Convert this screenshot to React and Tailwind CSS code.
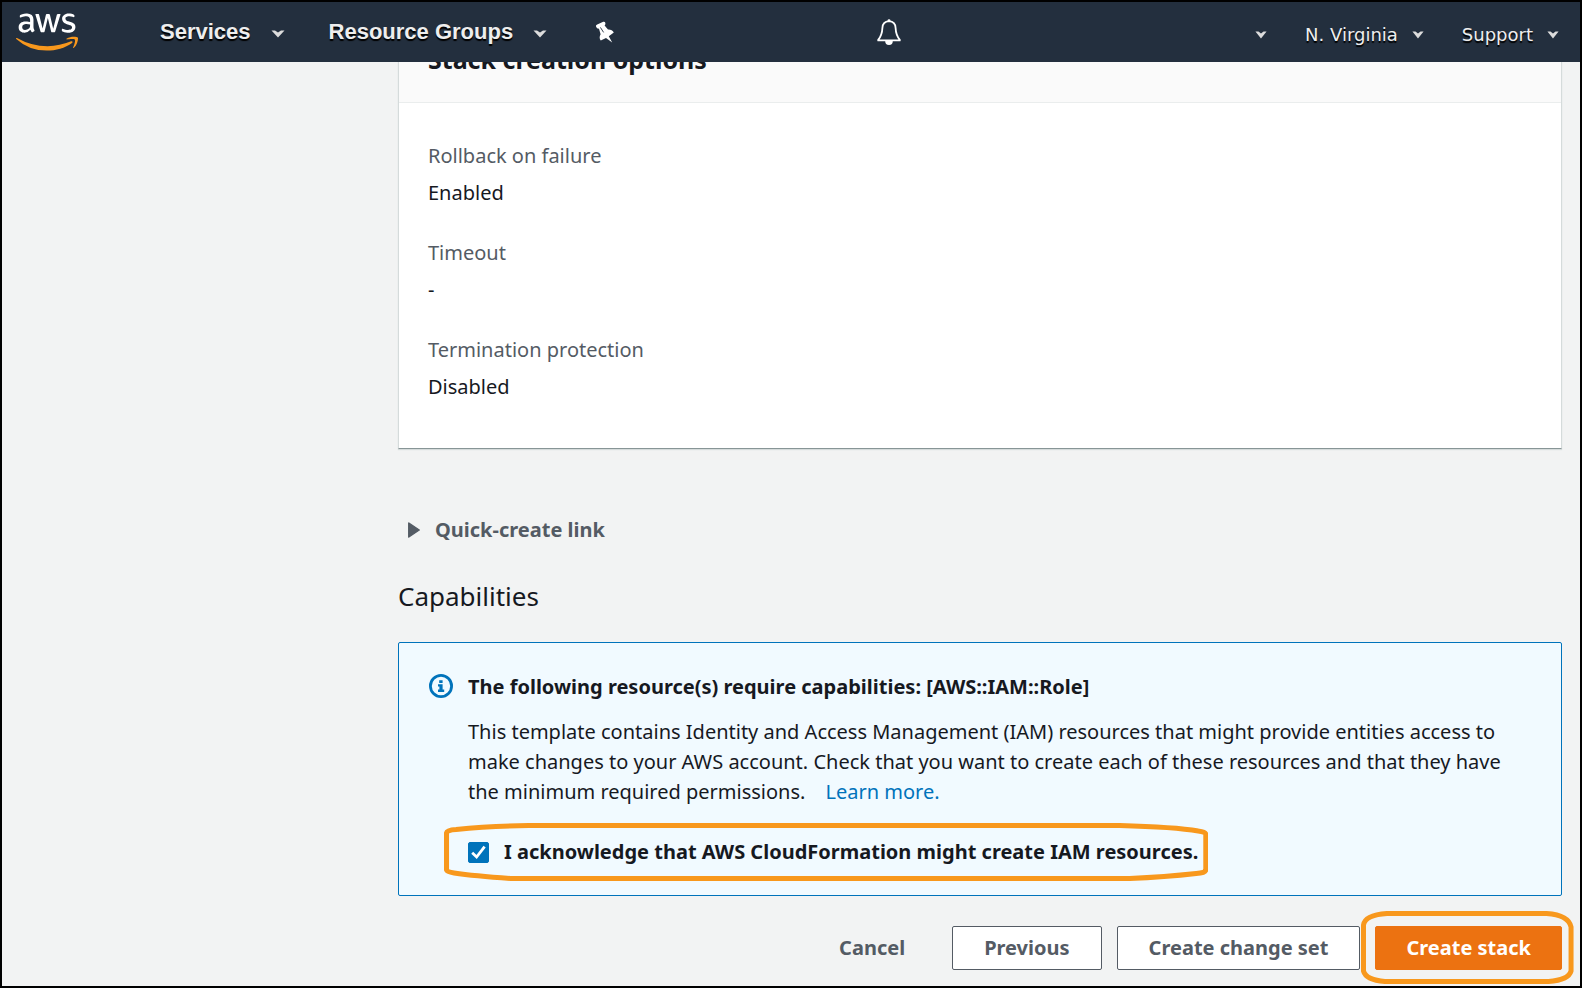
import { FaAws } from "react-icons/fa";

function Caret({ small }) {
  return (
    <svg className={small ? "h-2 w-3" : "mt-1 h-2 w-[14px]"} viewBox="0 0 14 8" aria-hidden="true" preserveAspectRatio="none">
      <path d="M0.5 0.5 H4 L7 2.6 L10 0.5 H13.5 L7 7.6 Z" fill="#dcdcdc" />
    </svg>
  );
}

function NavButton({ children }) {
  return (
    <button type="button" className="flex items-center gap-5 font-['Liberation_Sans',sans-serif] text-[22px] font-bold text-[#eeeeee] [text-shadow:0_2px_1px_#000]">
      {children}
      <Caret />
    </button>
  );
}

function UserButton({ children, label }) {
  return (
    <button type="button" aria-label={label} className="flex items-center gap-[14px] font-['DejaVu_Sans',sans-serif] text-lg text-[#eeeeee] [text-shadow:0_2px_1px_#000]">
      {children}
      <Caret small />
    </button>
  );
}

function Pin() {
  return (
    <svg className="h-[22px] w-5" viewBox="0 0 20 22" aria-hidden="true">
      <path
        d="M1 5.6 Q0.6 4 2.2 3.4 L8.2 0.8 Q10 0.4 10.4 2 Q10.6 3.6 9.6 4.4 L13 8.4 Q17.2 8.2 18.8 11.6 L13.8 15.2 L17.2 21.6 L11 17 L5.8 19.6 Q3.6 16.8 5.6 13.2 L4 7.8 Q1.6 7.8 1 5.6 Z"
        fill="#fff"
      />
      <path d="M5.4 6.4 L8.6 11.4" stroke="#232f3e" strokeWidth="0.9" fill="none" />
    </svg>
  );
}

function Bell() {
  return (
    <svg className="h-[26px] w-6" viewBox="0 0 24 26" aria-hidden="true" fill="none" stroke="#fff">
      <path d="M12 2.2 C7.5 2.6 5.5 5.2 5.4 9 C5.2 14 4.6 16.8 1.2 20.8 V21.4 H22.8 V20.8 C19.4 16.8 18.8 14 18.6 9 C18.5 5.2 16.5 2.6 12 2.2 Z" strokeWidth="1.8" strokeLinejoin="round" />
      <circle cx="12" cy="1.6" r="1.4" fill="#fff" stroke="none" />
      <path d="M8.2 22 H15.8 A3.8 4 0 0 1 8.2 22 Z" fill="#fff" stroke="none" />
    </svg>
  );
}

const options = [
  ["Rollback on failure", "Enabled"],
  ["Timeout", "-"],
  ["Termination protection", "Disabled"],
];

export default function App() {
  return (
    <div className="flex min-h-screen flex-col border-2 border-black bg-[#f2f3f3] font-['Noto_Sans',sans-serif] text-xl leading-[30px] text-[#16191f]">
      <header className="flex h-[60px] items-center justify-between bg-[#232f3e] pr-[21px] pl-[14px]">
        <div className="flex items-center">
          <a href="#home" aria-label="AWS home" className="mr-[82px]">
            <svg width="0" height="0" className="absolute" aria-hidden="true">
              <linearGradient id="logo" x1="0" y1="0" x2="0" y2="1">
                <stop offset="0.6" stopColor="#fff" />
                <stop offset="0.6" stopColor="#f8981d" />
              </linearGradient>
            </svg>
            <FaAws className="h-[50px] w-[62px]" style={{ fill: "url(#logo)" }} />
          </a>
          <nav className="flex items-center gap-11">
            <NavButton>Services</NavButton>
            <NavButton>Resource Groups</NavButton>
            <button type="button" aria-label="Pin shortcuts" className="pl-1"><Pin /></button>
          </nav>
        </div>
        <div className="flex items-center">
          <button type="button" aria-label="Notifications" className="mr-[354px]"><Bell /></button>
          <div className="flex items-center gap-[38px] pt-[5px]">
            <UserButton label="Account" />
            <UserButton>N. Virginia</UserButton>
            <UserButton>Support</UserButton>
          </div>
        </div>
      </header>

      <main className="flex-1 overflow-hidden pr-[18px] pl-[396px]">
        <section className="-mt-[40px] border border-[#d5dbdb] border-b-[#879596] bg-white shadow-[0_1px_1px_#d5dbdb]">
          <div className="border-b border-[#eaeded] bg-[#fafafa] px-[29px] pt-[21px] pb-7">
            <h2 className="text-[25px] leading-[30px] font-bold">Stack creation options</h2>
          </div>
          <dl className="flex flex-col gap-[30px] px-[29px] pt-[38px] pb-[46px]">
            {options.map(([name, value]) => (
              <div key={name} className="flex flex-col gap-[7px]">
                <dt className="text-[#545b64]">{name}</dt>
                <dd>{value}</dd>
              </div>
            ))}
          </dl>
        </section>

        <details className="mt-[66px] pl-[10px]">
          <summary className="flex cursor-pointer items-center gap-[15px] font-bold text-[#545b64]">
            <svg className="h-4 w-3" viewBox="0 0 12 16" aria-hidden="true">
              <path d="M0.8 1 L11.2 8 L0.8 15 Z" fill="#545b64" stroke="#545b64" strokeWidth="1.5" strokeLinejoin="round" />
            </svg>
            Quick-create link
          </summary>
        </details>

        <h2 className="mt-[33px] text-[26px] leading-9">Capabilities</h2>

        <section className="mt-7 flex gap-[15px] rounded-xs border border-[#0073bb] bg-[#f1faff] px-[30px] pt-[29px] pb-7">
          <svg className="mt-[2px] h-6 w-6 shrink-0" viewBox="0 0 24 24" aria-hidden="true">
            <circle cx="12" cy="12" r="10.6" fill="none" stroke="#0073bb" strokeWidth="2.8" />
            <path d="M10.2 6.2 H13.6 V9 H10.2 Z M9 10.2 H13.6 V15.6 H15.2 V18 H9 V15.6 H10.4 V12.4 H9 Z" fill="#0073bb" />
          </svg>
          <div className="flex-1">
            <h3 className="font-bold">The following resource(s) require capabilities: [AWS::IAM::Role]</h3>
            <p className="mt-[15px]">
              This template contains Identity and Access Management (IAM) resources that might provide entities access to make changes to your AWS account. Check that you want to create each of these resources and that they have the minimum required permissions.
              <a href="#learn-more" className="ml-5 text-[#0073bb]">Learn more.</a>
            </p>
            <div className="relative mt-[30px] flex w-fit items-center">
              <span className="grid">
                <input id="ack" type="checkbox" defaultChecked className="peer col-start-1 row-start-1 h-[21px] w-[21px] appearance-none rounded-xs border border-[#0073bb] bg-white checked:bg-[#0073bb]" />
                <svg className="pointer-events-none invisible col-start-1 row-start-1 h-[21px] w-[21px] peer-checked:visible" viewBox="0 0 21 21" aria-hidden="true">
                  <path d="M4.2 10.8 L8.6 15 L16.6 4.6" fill="none" stroke="#fff" strokeWidth="2.8" />
                </svg>
              </span>
              <label htmlFor="ack" className="pl-[15px] font-bold">I acknowledge that AWS CloudFormation might create IAM resources.</label>
              <svg className="pointer-events-none absolute -top-[14px] -left-6 h-[58px] w-[calc(100%+34px)]" viewBox="0 0 758 58" preserveAspectRatio="none" aria-hidden="true">
                <path d="M2.5 10 Q3 7 12 6.5 Q45 3 84 2.5 H670 Q725 4 748 8 Q755 9 755.5 11 V47 Q755 50 746 50.5 Q715 54 680 55.5 H66 Q30 53 10 50 Q3 49 2.5 47 Z" fill="none" stroke="#f8981d" strokeWidth="5" strokeLinejoin="round" />
              </svg>
            </div>
          </div>
        </section>

        <div className="mt-[30px] mb-[15px] flex justify-end gap-[15px] font-bold text-[#545b64]">
          <button type="button" className="px-8">Cancel</button>
          <button type="button" className="rounded-xs border border-[#545b64] bg-white px-[31px] py-[6px]">Previous</button>
          <button type="button" className="rounded-xs border border-[#545b64] bg-white px-[31px] py-[6px]">Create change set</button>
          <div className="relative">
            <button type="button" className="rounded-xs border border-[#ec7211] bg-[#ec7211] px-[30px] py-[6px] text-white">Create stack</button>
            <svg className="pointer-events-none absolute -top-[15px] -left-[14px] h-[73px] w-[calc(100%+26px)]" viewBox="0 0 213 73" preserveAspectRatio="none" aria-hidden="true">
              <path d="M2.5 14 Q4 4 26 2.5 H186 Q208 4 210.5 16 V60 Q208 69 188 70.5 H24 Q5 69 2.5 60 Z" fill="none" stroke="#f8981d" strokeWidth="5" strokeLinejoin="round" />
            </svg>
          </div>
        </div>
      </main>
    </div>
  );
}
